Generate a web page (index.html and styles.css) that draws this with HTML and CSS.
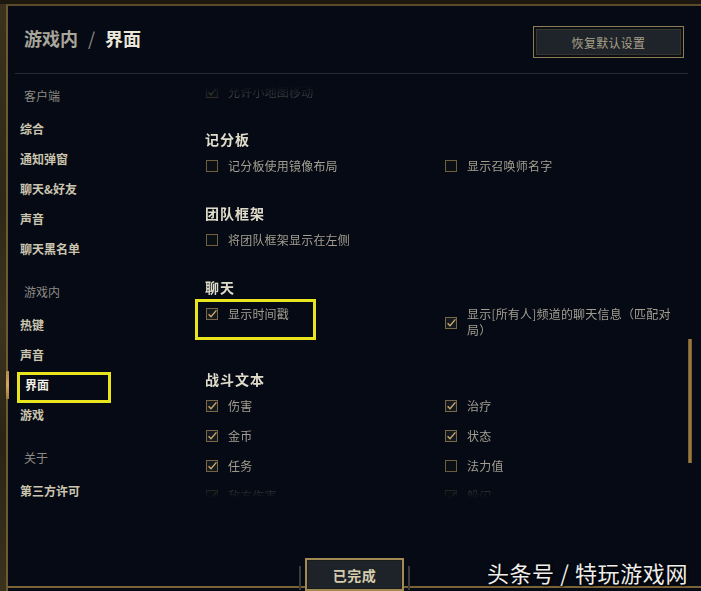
FILE: index.html
```html
<!DOCTYPE html>
<html lang="zh-CN">
<head>
<meta charset="utf-8">
<title>游戏内 / 界面</title>
<link rel="stylesheet" href="styles.css">
</head>
<body>
<div class="window">
  <header class="header">
    <h1 class="title"><span class="crumb">游戏内</span><span class="slash">/</span><span class="current">界面</span></h1>
    <button class="btn-reset">恢复默认设置</button>
  </header>
  <div class="divider"></div>
  <div class="main">
    <nav class="sidebar">
      <div class="nav-label">客户端</div>
      <div class="nav-item">综合</div>
      <div class="nav-item">通知弹窗</div>
      <div class="nav-item">聊天&amp;好友</div>
      <div class="nav-item">声音</div>
      <div class="nav-item">聊天黑名单</div>
      <div class="nav-label gap">游戏内</div>
      <div class="nav-item">热键</div>
      <div class="nav-item">声音</div>
      <div class="nav-item selected">界面</div>
      <div class="nav-item">游戏</div>
      <div class="nav-label gap">关于</div>
      <div class="nav-item">第三方许可</div>
    </nav>
    <div class="scroll">
      <section class="section">
        <div class="grid">
          <div class="row"><span class="cb checked"><svg viewBox="0 0 12 12"><path d="M2.6 6.2 L5 8.8 L10.4 2.4"/></svg></span><span class="lbl">允许小地图移动</span></div>
        </div>
      </section>
      <section class="section">
        <h2 class="sec-title">记分板</h2>
        <div class="grid">
          <div class="row"><span class="cb"></span><span class="lbl">记分板使用镜像布局</span></div>
          <div class="row"><span class="cb"></span><span class="lbl">显示召唤师名字</span></div>
        </div>
      </section>
      <section class="section">
        <h2 class="sec-title">团队框架</h2>
        <div class="grid">
          <div class="row"><span class="cb"></span><span class="lbl">将团队框架显示在左侧</span></div>
        </div>
      </section>
      <section class="section">
        <h2 class="sec-title">聊天</h2>
        <div class="grid">
          <div class="row marked"><span class="cb checked"><svg viewBox="0 0 12 12"><path d="M2.6 6.2 L5 8.8 L10.4 2.4"/></svg></span><span class="lbl">显示时间戳</span></div>
          <div class="row multi"><span class="cb checked"><svg viewBox="0 0 12 12"><path d="M2.6 6.2 L5 8.8 L10.4 2.4"/></svg></span><span class="lbl">显示[所有人]频道的聊天信息（匹配对局）</span></div>
        </div>
      </section>
      <section class="section">
        <h2 class="sec-title">战斗文本</h2>
        <div class="grid">
          <div class="row"><span class="cb checked"><svg viewBox="0 0 12 12"><path d="M2.6 6.2 L5 8.8 L10.4 2.4"/></svg></span><span class="lbl">伤害</span></div>
          <div class="row"><span class="cb checked"><svg viewBox="0 0 12 12"><path d="M2.6 6.2 L5 8.8 L10.4 2.4"/></svg></span><span class="lbl">治疗</span></div>
          <div class="row"><span class="cb checked"><svg viewBox="0 0 12 12"><path d="M2.6 6.2 L5 8.8 L10.4 2.4"/></svg></span><span class="lbl">金币</span></div>
          <div class="row"><span class="cb checked"><svg viewBox="0 0 12 12"><path d="M2.6 6.2 L5 8.8 L10.4 2.4"/></svg></span><span class="lbl">状态</span></div>
          <div class="row"><span class="cb checked"><svg viewBox="0 0 12 12"><path d="M2.6 6.2 L5 8.8 L10.4 2.4"/></svg></span><span class="lbl">任务</span></div>
          <div class="row"><span class="cb"></span><span class="lbl">法力值</span></div>
          <div class="row"><span class="cb checked"><svg viewBox="0 0 12 12"><path d="M2.6 6.2 L5 8.8 L10.4 2.4"/></svg></span><span class="lbl">敌方伤害</span></div>
          <div class="row"><span class="cb checked"><svg viewBox="0 0 12 12"><path d="M2.6 6.2 L5 8.8 L10.4 2.4"/></svg></span><span class="lbl">躲闪</span></div>
        </div>
      </section>
    </div>
    <div class="track"><div class="thumb"></div></div>
  </div>
  <footer class="footer">
    <span class="flank"></span>
    <button class="btn-done">已完成</button>
    <span class="flank"></span>
  </footer>
  <div class="watermark">头条号 / 特玩游戏网</div>
</div>
</body>
</html>
```
FILE: styles.css
```css
*, *::before, *::after { box-sizing: border-box; }

html, body {
  margin: 0;
  width: 701px;
  height: 591px;
  overflow: hidden;
}

body {
  font-family: "Noto Sans CJK SC", "Noto Sans", sans-serif;
  background: linear-gradient(to bottom, #1c180f 0, #1c180f 4px, #3a321c 4px, #2e2816 35%, #3c341e 55%, #2a2414 75%, #3a321d 100%);
  padding: 4px 0 0 6px;
}

.window {
  position: relative;
  width: 695px;
  height: 587px;
  border-top: 2px solid #5c4b2a;
  border-left: 2px solid #6e5932;
  background: #050a14;
  display: flex;
  flex-direction: column;
}

/* header */
.header {
  height: 67px;
  flex: none;
  display: flex;
  align-items: center;
  justify-content: space-between;
  padding: 0 17px 0 16px;
}

.title {
  margin: 0;
  font-size: 18px;
  font-weight: 700;
  line-height: 24px;
  margin-top: -4px;
  display: flex;
}

.crumb { color: #a8a59b; }
.slash { color: #8d8a82; font-weight: 400; margin: 0 10px; }
.current { color: #ebe7da; }

.btn-reset {
  margin-top: 5px;
  width: 151px;
  height: 32px;
  border: 1px solid #8d7c56;
  box-shadow: inset 0 0 0 2px #0b0f14, inset 0 0 0 3px #34362f;
  background: #1f232a;
  color: #a8a089;
  font-family: inherit;
  font-size: 12px;
  padding: 0;
  letter-spacing: 0.3px;
}

.divider {
  height: 1px;
  flex: none;
  margin: 0 13px 0 7px;
  background: #222c31;
}

/* main */
.main {
  height: 476px;
  flex: none;
  display: flex;
  padding-right: 9px;
}

.sidebar {
  width: 184px;
  flex: none;
  padding-top: 7px;
}

.nav-label {
  height: 30px;
  line-height: 30px;
  padding-left: 16px;
  font-size: 12px;
  color: #8d8b84;
  margin-bottom: 3px;
}

.nav-label.gap { margin-top: 13px; }

.nav-item {
  position: relative;
  height: 30px;
  line-height: 30px;
  padding-left: 12px;
  font-size: 12px;
  font-weight: 700;
  color: #cbc5af;
}

.nav-item.selected {
  padding-left: 17px;
  color: #f1efe6;
}

.nav-item.selected::before {
  content: "";
  position: absolute;
  left: -2px;
  top: 1px;
  width: 3px;
  height: 28px;
  background: linear-gradient(to bottom, #b48a4a, #d4a860, #a07a40);
}

.nav-item.selected::after {
  content: "";
  position: absolute;
  left: 9px;
  top: 2px;
  width: 94px;
  height: 31px;
  border: 3px solid #e8e41e;
}

/* content */
.scroll {
  flex: 1;
  height: 428px;
  overflow: hidden;
  padding: 8px 0 0 14px;
  display: flex;
  flex-direction: column;
  gap: 27px;
  -webkit-mask-image: linear-gradient(to bottom, transparent 0, transparent 12px, #000 44px, #000 396px, transparent 424px);
  mask-image: linear-gradient(to bottom, transparent 0, transparent 12px, #000 44px, #000 396px, transparent 424px);
}

.section { flex: none; }

.sec-title {
  margin: 0 0 7px -1px;
  font-size: 14px;
  font-weight: 700;
  line-height: 20px;
  letter-spacing: 1px;
  color: #e0dccb;
}

.grid {
  display: grid;
  grid-template-columns: 239px 1fr;
  row-gap: 10px;
  align-items: start;
}

.row {
  position: relative;
  display: flex;
  align-items: center;
  gap: 10px;
  min-height: 20px;
}

.lbl {
  font-size: 12px;
  line-height: 16px;
  padding: 2px 0;
  color: #a39e90;
  letter-spacing: 0.2px;
}

.multi .lbl {
  max-width: 206px;
  padding: 2px 0 4px;
}

.marked::after {
  content: "";
  position: absolute;
  left: -11px;
  top: -5px;
  width: 121px;
  height: 41px;
  border: 3px solid #e8e41e;
}

.cb {
  flex: none;
  width: 12px;
  height: 12px;
  border: 1px solid #6f5f3f;
  background: #0a0f16;
  display: flex;
}

.cb.checked {
  border-color: #7a6844;
  background: #141820;
}

.cb svg {
  width: 12px;
  height: 12px;
  margin: -1px;
  overflow: visible;
}

.cb svg path {
  fill: none;
  stroke: #c9ab6c;
  stroke-width: 1.4;
}

/* scrollbar */
.track {
  width: 4px;
  flex: none;
}

.thumb {
  margin-top: 265px;
  height: 124px;
  background: linear-gradient(to right, #6a5226, #a8864a, #6a5226);
}

/* footer */
.footer {
  height: 41px;
  flex: none;
  padding-top: 7px;
  display: flex;
  justify-content: center;
  align-items: flex-end;
  gap: 4px;
  background: linear-gradient(to bottom, transparent 36px, #7a6436 36px, #7a6436 38px, #050a14 38px);
}

.flank {
  width: 2px;
  height: 24px;
  margin-bottom: 1px;
  background: #3b3d3c;
}

.btn-done {
  width: 99px;
  height: 33px;
  border: 2px solid #a28a52;
  box-shadow: inset 0 0 0 1px #1a1c1c;
  background: #1e2329;
  color: #d6cdae;
  font-family: inherit;
  font-size: 14px;
  font-weight: 700;
  padding: 0;
  letter-spacing: 0.5px;
}

.watermark {
  position: absolute;
  right: 13px;
  bottom: 6px;
  font-size: 22px;
  line-height: 26px;
  letter-spacing: 0.6px;
  color: #eeeeee;
  text-shadow: 1px 1px 2px #000, 0 0 3px #000;
}
```
